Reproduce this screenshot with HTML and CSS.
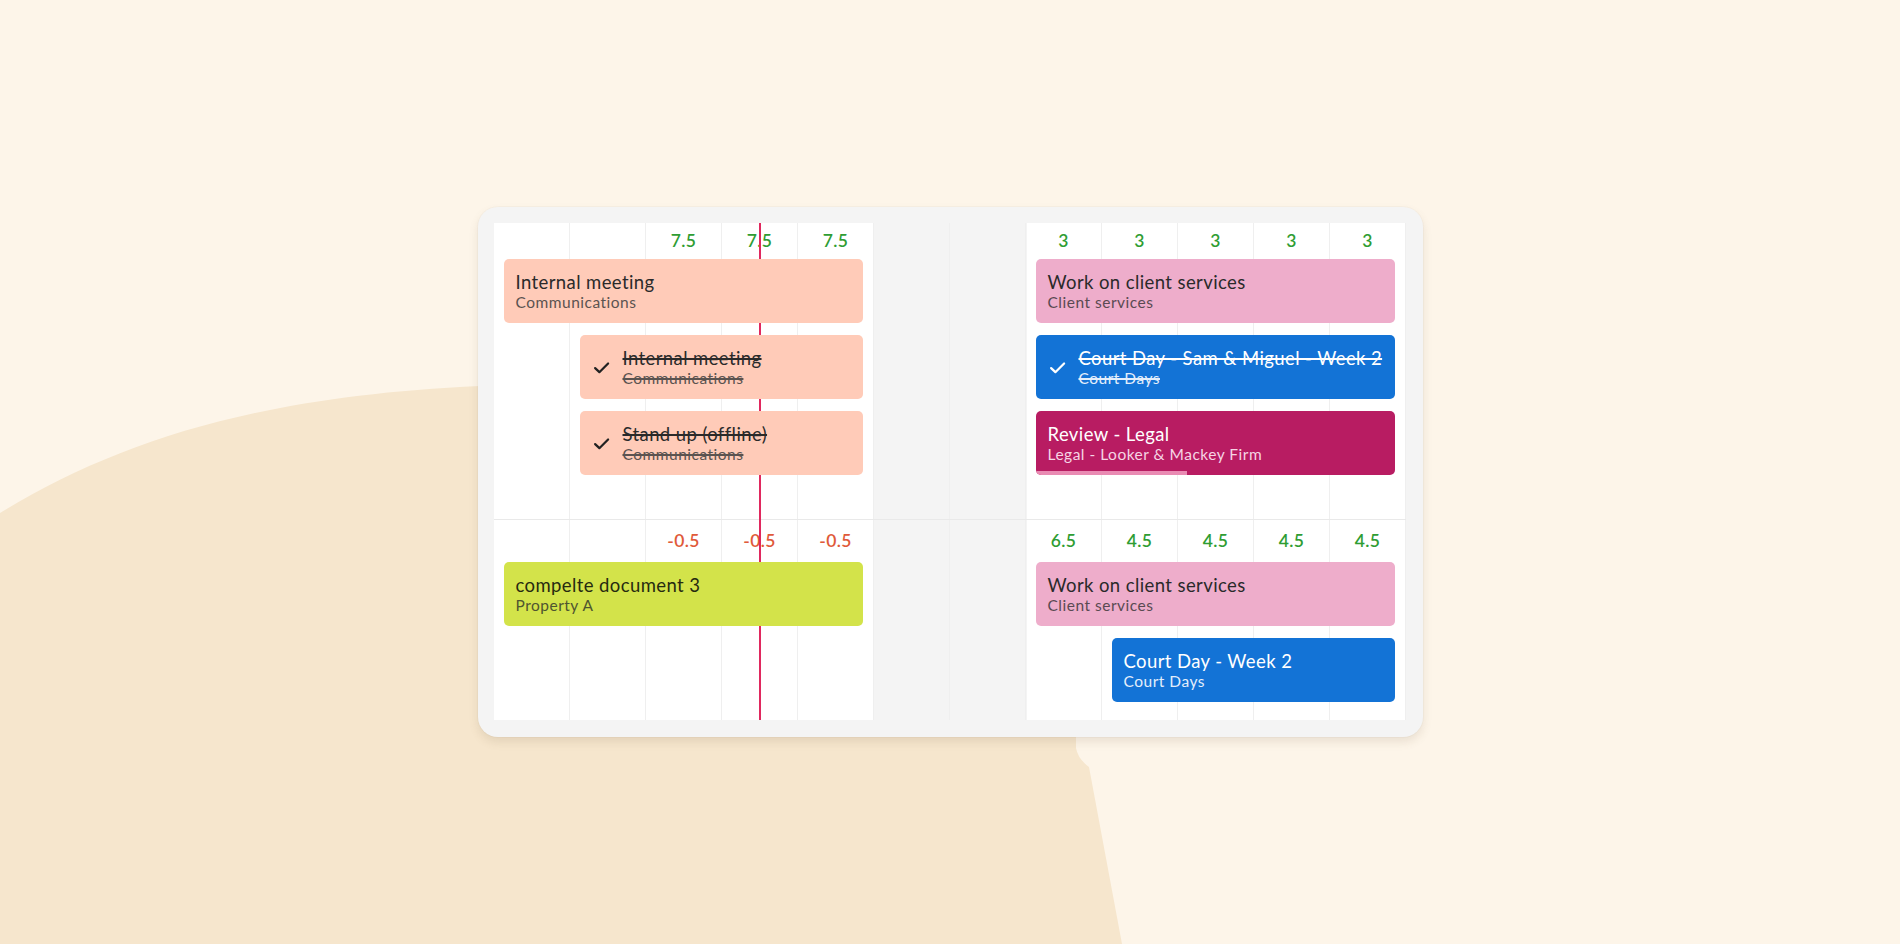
FILE: index.html
```html
<!DOCTYPE html>
<html lang="en">
<head>
<meta charset="utf-8">
<title>Schedule</title>
<link rel="stylesheet" href="styles.css">
</head>
<body>
<svg class="backdrop" width="1900" height="944" viewBox="0 0 1900 944" aria-hidden="true">
  <path class="blob" d="M0,513 C120,440 260,396 480,386 L1076,386 L1076,748 Q1078,759 1089,767 L1122,944 L0,944 Z"/>
</svg>
<main class="stage">
  <div class="card">
    <div class="board">
      <div class="now-line"></div>

      <section class="week week-top">
        <span class="num pos col-3">7.5</span>
        <span class="num pos col-4">7.5</span>
        <span class="num pos col-5">7.5</span>
        <span class="num pos col-8">3</span>
        <span class="num pos col-9">3</span>
        <span class="num pos col-10">3</span>
        <span class="num pos col-11">3</span>
        <span class="num pos col-12">3</span>

        <div class="event salmon from-1 to-5 row-2">
          <div class="text">
            <span class="title">Internal meeting</span>
            <span class="sub">Communications</span>
          </div>
        </div>
        <div class="event salmon done from-2 to-5 row-3">
          <svg class="check" viewBox="0 0 16 16"><path d="M2 8.6 L6 12.4 L14.2 4.2"/></svg>
          <div class="text">
            <span class="title">Internal meeting</span>
            <span class="sub">Communications</span>
          </div>
        </div>
        <div class="event salmon done from-2 to-5 row-4">
          <svg class="check" viewBox="0 0 16 16"><path d="M2 8.6 L6 12.4 L14.2 4.2"/></svg>
          <div class="text">
            <span class="title">Stand up (offline)</span>
            <span class="sub">Communications</span>
          </div>
        </div>

        <div class="event pink from-8 to-12 row-2">
          <div class="text">
            <span class="title">Work on client services</span>
            <span class="sub">Client services</span>
          </div>
        </div>
        <div class="event blue done from-8 to-12 row-3">
          <svg class="check" viewBox="0 0 16 16"><path d="M2 8.6 L6 12.4 L14.2 4.2"/></svg>
          <div class="text">
            <span class="title">Court Day - Sam &amp; Miguel - Week 2</span>
            <span class="sub">Court Days</span>
          </div>
        </div>
        <div class="event magenta from-8 to-12 row-4">
          <div class="text">
            <span class="title">Review - Legal</span>
            <span class="sub">Legal - Looker &amp; Mackey Firm</span>
          </div>
          <div class="progress"></div>
        </div>
      </section>

      <section class="week week-bottom">
        <span class="num neg col-3">-0.5</span>
        <span class="num neg col-4">-0.5</span>
        <span class="num neg col-5">-0.5</span>
        <span class="num pos col-8">6.5</span>
        <span class="num pos col-9">4.5</span>
        <span class="num pos col-10">4.5</span>
        <span class="num pos col-11">4.5</span>
        <span class="num pos col-12">4.5</span>

        <div class="event lime from-1 to-5 row-2">
          <div class="text">
            <span class="title">compelte document 3</span>
            <span class="sub">Property A</span>
          </div>
        </div>
        <div class="event pink from-8 to-12 row-2">
          <div class="text">
            <span class="title">Work on client services</span>
            <span class="sub">Client services</span>
          </div>
        </div>
        <div class="event blue from-9 to-12 row-3">
          <div class="text">
            <span class="title">Court Day - Week 2</span>
            <span class="sub">Court Days</span>
          </div>
        </div>
      </section>
    </div>
  </div>
</main>
</body>
</html>
```
FILE: styles.css
```css
html, body {
  margin: 0;
  padding: 0;
}

body {
  width: 1900px;
  height: 944px;
  overflow: hidden;
  background: #fdf5e9;
  font-family: "Lato", "Liberation Sans", sans-serif;
  color: #2a2a2a;
  position: relative;
}

.backdrop {
  position: absolute;
  left: 0;
  top: 0;
  z-index: 0;
}

.blob {
  fill: #f6e6cd;
}

.stage {
  position: relative;
  z-index: 1;
  display: flex;
  justify-content: center;
  padding-top: 207px;
}

.card {
  width: 945px;
  box-sizing: border-box;
  padding: 16px 17px 17px 16px;
  background: #f4f4f4;
  border-radius: 20px;
  box-shadow: 0 5px 10px rgba(120, 100, 70, 0.14), 0 0 0 1px rgba(0, 0, 0, 0.02);
}

.board {
  position: relative;
  width: 912px;
  background:
    repeating-linear-gradient(to right, transparent 0 75px, #efefef 75px 76px),
    linear-gradient(to right, #ffffff 0 379px, #f4f4f4 379px 533px, #ffffff 533px 912px);
}

.now-line {
  position: absolute;
  left: 265px;
  top: 0;
  bottom: 0;
  width: 2px;
  background: #e0285e;
  z-index: 1;
}

.week {
  display: grid;
  grid-template-columns: repeat(12, 76px);
  grid-auto-rows: 76px;
  box-sizing: border-box;
}

.week-top {
  height: 297px;
  grid-template-rows: 36px;
  border-bottom: 1px solid #e9e9e9;
}

.week-bottom {
  height: 200px;
  grid-template-rows: 42px;
}

.num {
  grid-row: 1;
  text-align: center;
  align-self: center;
  font-size: 17.5px;
  font-weight: 600;
  line-height: 20px;
  letter-spacing: 0.4px;
}

.pos { color: #2f9d33; }
.neg { color: #e05a3a; }

.col-3 { grid-column: 3; }
.col-4 { grid-column: 4; }
.col-5 { grid-column: 5; }
.col-8 { grid-column: 8; }
.col-9 { grid-column: 9; }
.col-10 { grid-column: 10; }
.col-11 { grid-column: 11; }
.col-12 { grid-column: 12; }

.from-1 { grid-column-start: 1; }
.from-2 { grid-column-start: 2; }
.from-8 { grid-column-start: 8; }
.from-9 { grid-column-start: 9; }
.to-5 { grid-column-end: 6; }
.to-12 { grid-column-end: 13; }

.row-2 { grid-row: 2; }
.row-3 { grid-row: 3; }
.row-4 { grid-row: 4; }

.event {
  position: relative;
  z-index: 2;
  display: flex;
  align-items: center;
  gap: 14px;
  height: 64px;
  margin: 0 11px 0 10px;
  padding: 0 10px 0 12px;
  box-sizing: border-box;
  border-radius: 5px;
  overflow: hidden;
  align-self: start;
}

.text {
  display: flex;
  flex-direction: column;
  min-width: 0;
}

.title {
  font-size: 18.5px;
  line-height: 21px;
  letter-spacing: 0.4px;
  white-space: nowrap;
}

.sub {
  font-size: 15.5px;
  line-height: 18px;
  letter-spacing: 0.5px;
  white-space: nowrap;
}

.done .title,
.done .sub {
  text-decoration: line-through;
  text-decoration-thickness: 1.5px;
}

.check {
  flex: none;
  width: 17px;
  height: 17px;
  margin-left: 1px;
  margin-right: -1px;
  fill: none;
  stroke: #222222;
  stroke-width: 2.1;
  stroke-linecap: round;
  stroke-linejoin: round;
}

.salmon { background: #ffcbb8; }
.salmon .title { color: #2a2a2a; }
.salmon .sub { color: #5b5350; }

.pink { background: #eeadcb; }
.pink .title { color: #2a2a2a; }
.pink .sub { color: #5a4a52; }

.lime { background: #d3e34a; }
.lime .title { color: #262a10; }
.lime .sub { color: #4f5530; }

.blue { background: #1373d6; }
.blue .title { color: #ffffff; }
.blue .sub { color: #e3eefb; }
.blue .check { stroke: #ffffff; }

.magenta { background: #b81c62; }
.magenta .title { color: #ffffff; }
.magenta .sub { color: #f6d5e4; }

.progress {
  position: absolute;
  left: 0;
  bottom: 0;
  width: 151px;
  height: 4px;
  background: #e98bb3;
}
```
